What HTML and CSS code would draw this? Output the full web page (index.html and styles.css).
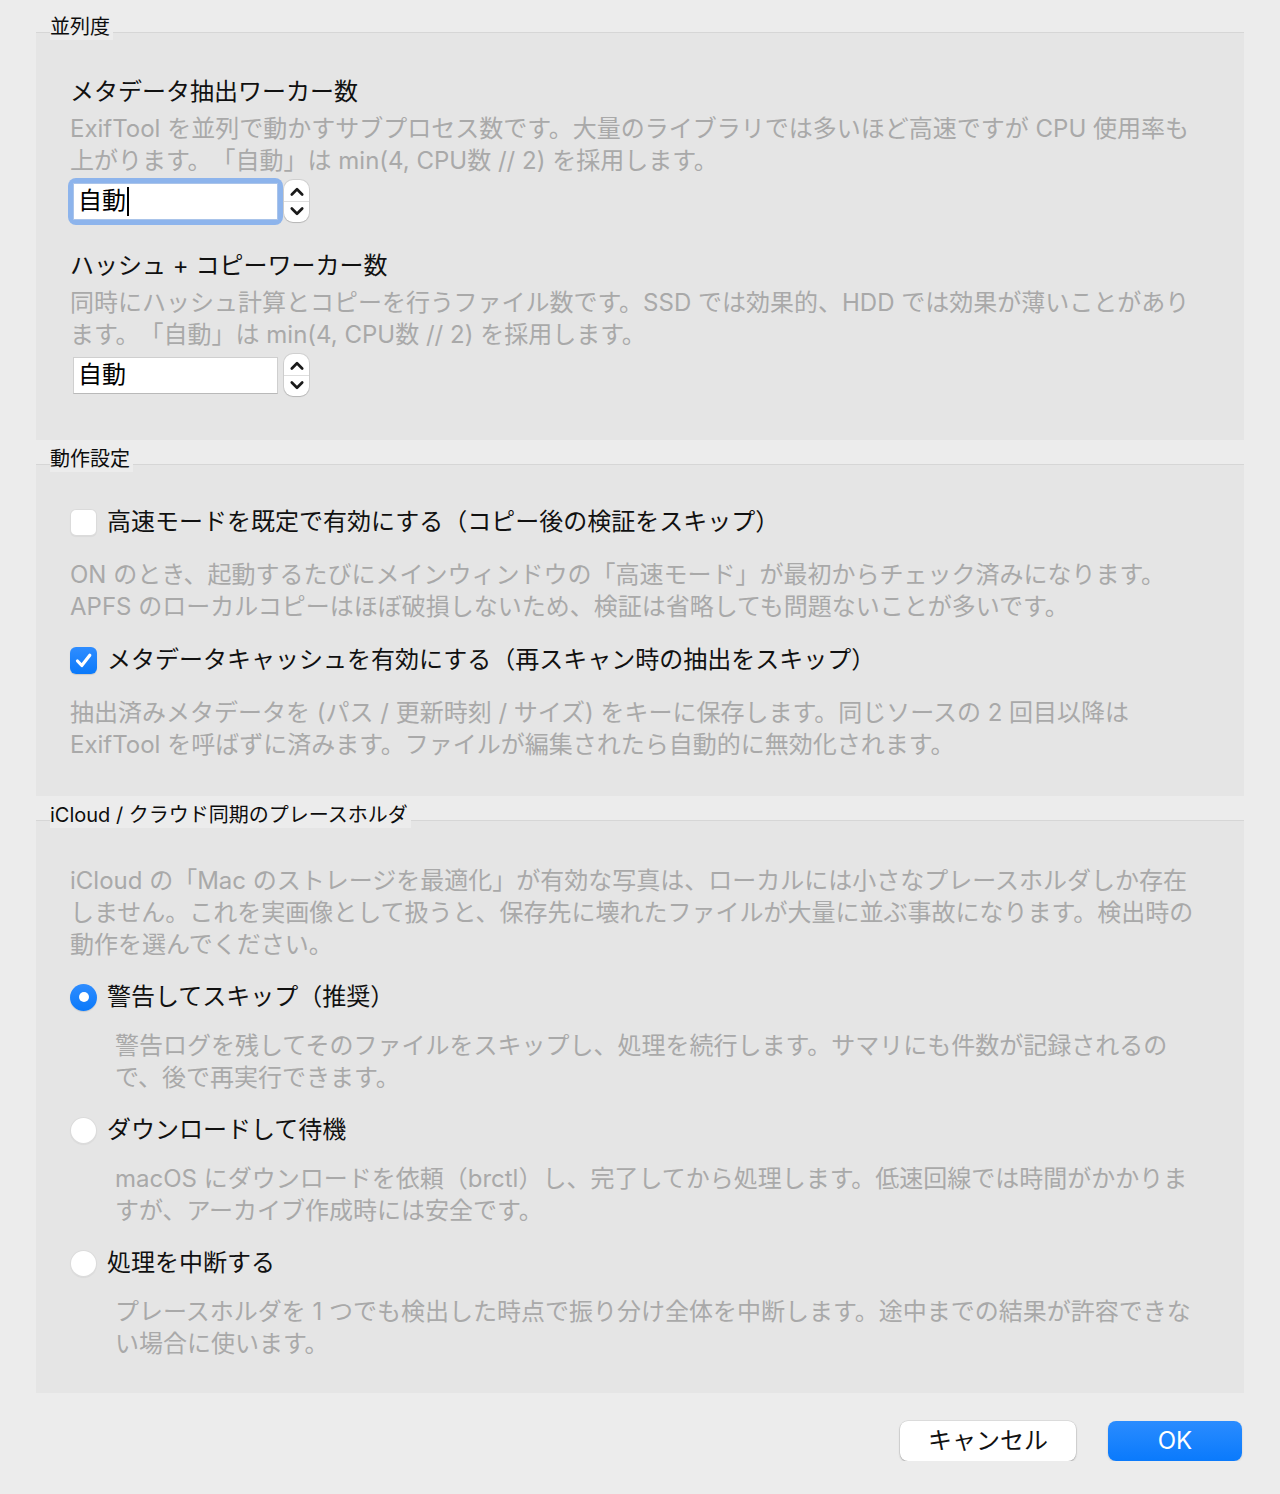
FILE: index.html
```html
<!DOCTYPE html>
<html lang="ja">
<head>
<meta charset="utf-8">
<title>設定</title>
<link rel="stylesheet" href="styles.css">
</head>
<body>
<div class="dialog">

  <section class="group">
    <div class="group-title">並列度</div>
    <div class="group-box box-parallel">
      <div class="field">
        <div class="label">メタデータ抽出ワーカー数</div>
        <p class="desc">ExifTool を並列で動かすサブプロセス数です。大量のライブラリでは多いほど高速ですが CPU 使用率も<br>上がります。「自動」は min(4, CPU数 // 2) を採用します。</p>
        <div class="spin-row">
          <div class="focus-ring">
            <div class="text-input"><span class="value">自動</span><span class="caret"></span></div>
          </div>
          <div class="stepper">
            <svg class="chev" viewBox="0 0 24 20" width="24" height="20"><path d="M6.8 13.5 L12 8.3 L17.2 13.5" /></svg>
            <span class="stepper-divider"></span>
            <svg class="chev" viewBox="0 0 24 20" width="24" height="20"><path d="M6.8 6.5 L12 11.7 L17.2 6.5" /></svg>
          </div>
        </div>
      </div>
      <div class="field">
        <div class="label">ハッシュ + コピーワーカー数</div>
        <p class="desc">同時にハッシュ計算とコピーを行うファイル数です。SSD では効果的、HDD では効果が薄いことがあり<br>ます。「自動」は min(4, CPU数 // 2) を採用します。</p>
        <div class="spin-row">
          <div class="text-input"><span class="value">自動</span></div>
          <div class="stepper">
            <svg class="chev" viewBox="0 0 24 20" width="24" height="20"><path d="M6.8 13.5 L12 8.3 L17.2 13.5" /></svg>
            <span class="stepper-divider"></span>
            <svg class="chev" viewBox="0 0 24 20" width="24" height="20"><path d="M6.8 6.5 L12 11.7 L17.2 6.5" /></svg>
          </div>
        </div>
      </div>
    </div>
  </section>

  <section class="group">
    <div class="group-title">動作設定</div>
    <div class="group-box box-behavior">
      <div class="option">
        <span class="checkbox"></span>
        <span class="option-label">高速モードを既定で有効にする（コピー後の検証をスキップ）</span>
      </div>
      <p class="desc gap-after-option">ON のとき、起動するたびにメインウィンドウの「高速モード」が最初からチェック済みになります。<br>APFS のローカルコピーはほぼ破損しないため、検証は省略しても問題ないことが多いです。</p>
      <div class="option gap-after-desc">
        <span class="checkbox checked">
          <svg viewBox="0 0 27 27" width="27" height="27"><path d="M7.5 14 L11.8 18.5 L19.8 8.3" /></svg>
        </span>
        <span class="option-label">メタデータキャッシュを有効にする（再スキャン時の抽出をスキップ）</span>
      </div>
      <p class="desc gap-after-option">抽出済みメタデータを (パス / 更新時刻 / サイズ) をキーに保存します。同じソースの 2 回目以降は<br>ExifTool を呼ばずに済みます。ファイルが編集されたら自動的に無効化されます。</p>
    </div>
  </section>

  <section class="group">
    <div class="group-title">iCloud / クラウド同期のプレースホルダ</div>
    <div class="group-box box-icloud">
      <p class="desc">iCloud の「Mac のストレージを最適化」が有効な写真は、ローカルには小さなプレースホルダしか存在<br>しません。これを実画像として扱うと、保存先に壊れたファイルが大量に並ぶ事故になります。検出時の<br>動作を選んでください。</p>
      <div class="option radio-first">
        <span class="radio selected"></span>
        <span class="option-label">警告してスキップ（推奨）</span>
      </div>
      <p class="desc radio-desc">警告ログを残してそのファイルをスキップし、処理を続行します。サマリにも件数が記録されるの<br>で、後で再実行できます。</p>
      <div class="option radio-next">
        <span class="radio"></span>
        <span class="option-label">ダウンロードして待機</span>
      </div>
      <p class="desc radio-desc">macOS にダウンロードを依頼（brctl）し、完了してから処理します。低速回線では時間がかかりま<br>すが、アーカイブ作成時には安全です。</p>
      <div class="option radio-next">
        <span class="radio"></span>
        <span class="option-label">処理を中断する</span>
      </div>
      <p class="desc radio-desc">プレースホルダを 1 つでも検出した時点で振り分け全体を中断します。途中までの結果が許容できな<br>い場合に使います。</p>
    </div>
  </section>

  <div class="footer">
    <button class="btn btn-cancel" type="button">キャンセル</button>
    <button class="btn btn-ok" type="button">OK</button>
  </div>

</div>
</body>
</html>
```

FILE: styles.css
```css
* {
  box-sizing: border-box;
}

html, body {
  margin: 0;
  background: #ececec;
}

body {
  font-family: "Inter", "Noto Sans CJK JP", sans-serif;
  font-size: 24px;
  color: #1a1a1a;
  text-spacing-trim: space-all;
  -webkit-font-smoothing: antialiased;
}

.dialog {
  padding: 14px 36px 0;
  display: flex;
  flex-direction: column;
}

/* ---------- group boxes ---------- */

.group {
  display: flex;
  flex-direction: column;
}

.group + .group {
  margin-top: 6px;
}

.group-title {
  align-self: flex-start;
  position: relative;
  z-index: 1;
  margin-left: 14px;
  margin-bottom: -8px;
  padding-right: 3px;
  height: 26px;
  line-height: 26px;
  font-size: 20px;
  color: #0d0d0d;
  background: #ececec;
}

.group-box {
  background: #e5e5e5;
  border-top: 1px solid #d6d6d6;
  padding-left: 34px;
  padding-right: 30px;
}

.box-parallel {
  padding-top: 43px;
  padding-bottom: 44px;
}

.box-behavior {
  padding-top: 41px;
  padding-bottom: 35px;
}

.box-icloud {
  padding-top: 44px;
  padding-bottom: 33px;
}

/* ---------- text ---------- */

.label {
  line-height: 32px;
  color: #111;
}

.desc {
  margin: 5px 0 0;
  line-height: 32px;
  color: #a9a9a9;
}

.box-icloud > .desc:first-child {
  margin-top: 0;
}

/* ---------- spin fields ---------- */

.field + .field {
  margin-top: 28px;
}

.spin-row {
  margin-top: 3px;
  height: 42px;
  display: flex;
  align-items: center;
  padding-left: 3px;
}

.text-input {
  width: 205px;
  height: 37px;
  background: #fff;
  border: 1px solid #cfcfcf;
  border-bottom-color: #b9b9b9;
  display: flex;
  align-items: center;
  padding-left: 4px;
  font-size: 24px;
  color: #000;
}

/* keyboard focus halo drawn around the active field */
.focus-ring {
  margin: -5px;
  padding: 5px;
  border-radius: 8px;
  background: #8db4ec;
}

.focus-ring .text-input {
  border-color: #aac4ea;
}

.text-input .value {
  line-height: 1;
}

.caret {
  display: inline-block;
  width: 2px;
  height: 29px;
  margin-left: 1px;
  background: #000;
}

.stepper {
  margin-left: 6px;
  width: 25px;
  height: 42px;
  border-radius: 9px;
  background: #fff;
  box-shadow: 0 0 0 1px rgba(0, 0, 0, 0.09), 0 1px 1px rgba(0, 0, 0, 0.12);
  display: flex;
  flex-direction: column;
  align-items: center;
  justify-content: center;
}

.stepper .chev {
  display: block;
  width: 24px;
  height: 20px;
}

.stepper .chev path {
  fill: none;
  stroke: #1a1a1a;
  stroke-width: 2.7;
  stroke-linecap: round;
  stroke-linejoin: round;
}

.stepper-divider {
  display: block;
  width: 25px;
  height: 1px;
  background: #dedede;
}

/* ---------- checkboxes and radios ---------- */

.option {
  display: flex;
  align-items: center;
  height: 32px;
}

.option-label {
  margin-left: 10px;
  line-height: 32px;
  color: #111;
}

.gap-after-option {
  margin-top: 21px;
}

.gap-after-desc {
  margin-top: 21px;
}

.checkbox {
  flex: none;
  width: 27px;
  height: 27px;
  border-radius: 6px;
  background: #fff;
  box-shadow: inset 0 0 0 1px rgba(0, 0, 0, 0.14), 0 1px 1px rgba(0, 0, 0, 0.05);
  display: flex;
  align-items: center;
  justify-content: center;
}

.checkbox.checked {
  background: linear-gradient(#2f8dff, #0a79fa);
  box-shadow: 0 1px 1px rgba(0, 0, 0, 0.12);
}

.checkbox svg path {
  fill: none;
  stroke: #fff;
  stroke-width: 3.2;
  stroke-linecap: round;
  stroke-linejoin: round;
}

.radio {
  flex: none;
  width: 27px;
  height: 27px;
  border-radius: 50%;
  background: #fff;
  box-shadow: inset 0 0 0 1px rgba(0, 0, 0, 0.14), 0 1px 1px rgba(0, 0, 0, 0.05);
  display: flex;
  align-items: center;
  justify-content: center;
}

.radio.selected {
  background: linear-gradient(#2f8dff, #0a79fa);
  box-shadow: 0 1px 1px rgba(0, 0, 0, 0.12);
}

.radio.selected::after {
  content: "";
  width: 10px;
  height: 10px;
  border-radius: 50%;
  background: #fff;
}

.radio-first {
  margin-top: 20px;
}

.radio-next {
  margin-top: 20px;
}

.radio-desc {
  margin-top: 17px;
  padding-left: 45px;
}

/* ---------- footer buttons ---------- */

.footer {
  margin-top: 28px;
  padding-right: 2px;
  display: flex;
  justify-content: flex-end;
  gap: 32px;
}

.btn {
  height: 40px;
  border: 0;
  border-radius: 8px;
  font-family: "Inter", "Noto Sans CJK JP", sans-serif;
  font-size: 24px;
  line-height: 40px;
  padding: 0;
  cursor: default;
}

.btn-cancel {
  width: 176px;
  background: #fff;
  color: #111;
  box-shadow: 0 0 0 0.5px rgba(0, 0, 0, 0.12), 0 1px 2px rgba(0, 0, 0, 0.25);
}

.btn-ok {
  width: 134px;
  color: #fff;
  background: linear-gradient(#2a8cff, #0a7afc);
  box-shadow: 0 1px 2px rgba(0, 0, 0, 0.15);
}
```
